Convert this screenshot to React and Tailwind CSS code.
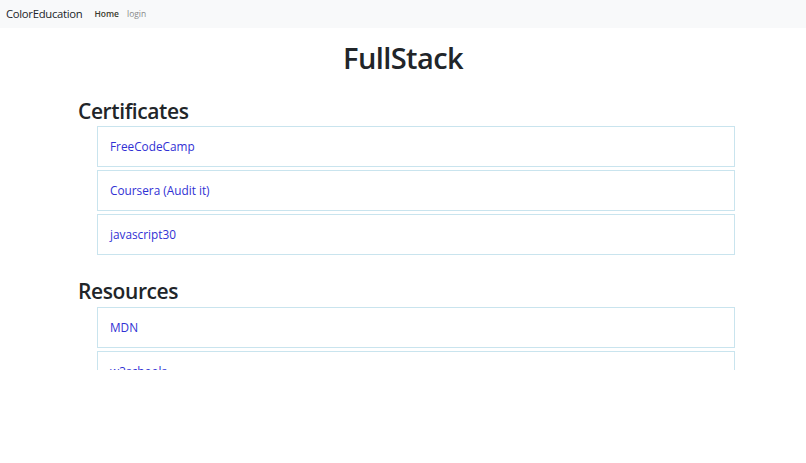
export default function App() {
  const certificates = ["FreeCodeCamp", "Coursera (Audit it)", "javascript30"];
  const resources = ["MDN", "w3schools"];

  return (
    <div className="w-[806px] h-[463px] bg-white text-[#212529]" style={{ fontFamily: '"Open Sans", "Noto Sans", sans-serif' }}>
      {/* Navbar */}
      <nav className="h-[28px] bg-[#f8f9fa] flex items-center px-[6px]">
        <span className="text-[11.3px] text-[#212529] mr-[12px] tracking-[-0.3px]">ColorEducation</span>
        <span className="text-[8.5px] font-semibold text-[#3b3b2e] mr-[8px]">Home</span>
        <span className="text-[8.5px] text-[#8a8a8a]">login</span>
      </nav>

      <div className="h-[342px] overflow-hidden">
        <h1 className="text-center text-[29px] font-semibold leading-none mt-[15px] tracking-[-0.6px]">FullStack</h1>

        <div className="pl-[78px] pr-[71px] mt-[29px]">
          <h2 className="text-[21px] font-semibold leading-none tracking-[-0.4px]">Certificates</h2>
          <ul className="ml-[19px] mt-[4px] flex flex-col gap-[3px]">
            {certificates.map((c) => (
              <li key={c} className="h-[41px] border border-[#c9e4ee] flex items-center pl-[12px] text-[11.8px] text-[#3131d4]">
                {c}
              </li>
            ))}
          </ul>

          <h2 className="text-[21px] font-semibold leading-none tracking-[-0.4px] mt-[26px]">Resources</h2>
          <ul className="ml-[19px] mt-[5px] flex flex-col gap-[3px]">
            {resources.map((c) => (
              <li key={c} className="h-[41px] border border-[#c9e4ee] flex items-center pl-[12px] text-[11.8px] text-[#3131d4]">
                {c}
              </li>
            ))}
          </ul>
        </div>
      </div>
    </div>
  );
}
